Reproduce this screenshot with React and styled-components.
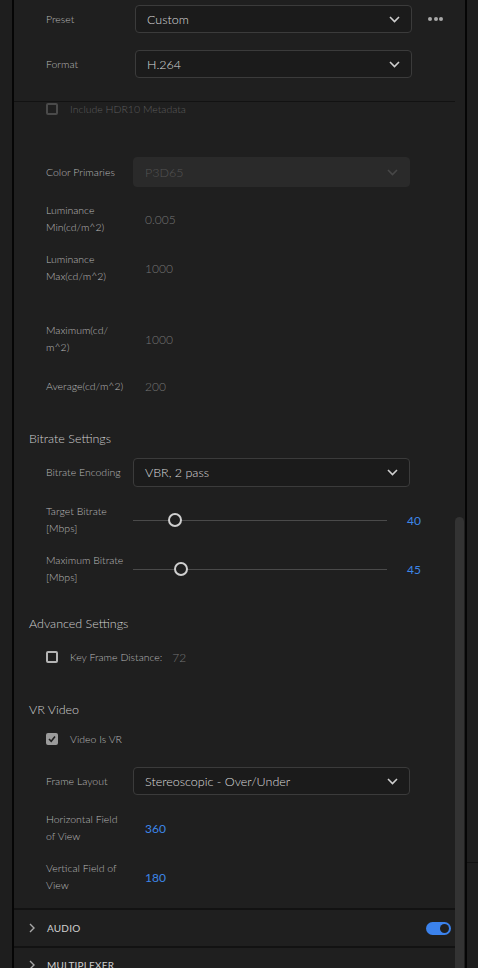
import React from "react";
import styled, { createGlobalStyle } from "styled-components";

const GlobalStyle = createGlobalStyle`
  html, body {
    margin: 0;
    padding: 0;
    background: #1f1f1f;
  }
  body {
    font-family: Lato, "Open Sans", sans-serif;
    font-weight: 300;
    -webkit-font-smoothing: antialiased;
  }
`;

const Frame = styled.div`
  display: flex;
  width: 478px;
  height: 968px;
  overflow: hidden;
  background: #1f1f1f;
`;

const Gutter = styled.div`
  width: ${(p) => p.$w}px;
  flex-shrink: 0;
  background: #1e1e1e;
`;

const GutterLine = styled.div`
  margin-top: ${(p) => p.$top}px;
  height: 1px;
  background: #121212;
`;

const Rule = styled.div`
  width: 2px;
  flex-shrink: 0;
  background: #050505;
`;

const Panel = styled.div`
  display: flex;
  width: 451px;
  flex-shrink: 0;
  background: #1f1f1f;
`;

const Content = styled.div`
  width: 441px;
  display: flex;
  flex-direction: column;
`;

const ScrollTrack = styled.div`
  width: 10px;
  padding-top: 517px;
  display: flex;
  flex-direction: column;
`;

const Thumb = styled.div`
  flex: 1;
  width: 9px;
  background: #333333;
  border-radius: 5px 5px 0 0;
`;

const Row = styled.div`
  display: flex;
  align-items: center;
  flex-shrink: 0;
  height: ${(p) => p.$h}px;
  margin-top: ${(p) => p.$mt || 0}px;
  padding-left: 32px;
`;

const Label = styled.div`
  width: ${(p) => p.$w || 87}px;
  flex-shrink: 0;
  font-size: 10.5px;
  line-height: 17px;
  color: #b8b8b8;
  white-space: nowrap;
`;

const SectionTitle = styled.div`
  flex-shrink: 0;
  height: 18px;
  margin-top: ${(p) => p.$mt}px;
  padding-left: 15px;
  font-size: 12.5px;
  line-height: 18px;
  color: #cfcfcf;
`;

const SelectBox = styled.div`
  width: 277px;
  height: ${(p) => p.$h || 28}px;
  box-sizing: border-box;
  display: flex;
  align-items: center;
  justify-content: space-between;
  padding: 0 11px 0 11px;
  border-radius: 4px;
  background: ${(p) => (p.$disabled ? "#2a2a2a" : "#1b1b1b")};
  border: 1px solid ${(p) => (p.$disabled ? "#2a2a2a" : "#3b3b3b")};
  color: ${(p) => (p.$disabled ? "#545454" : "#dcdcdc")};
  font-size: 12.5px;
`;

const Dots = styled.div`
  display: flex;
  gap: 1.5px;
  margin-left: 16px;
  span {
    width: 4px;
    height: 4px;
    border-radius: 50%;
    background: #a8a8a8;
  }
`;

const Divider = styled.div`
  flex-shrink: 0;
  height: ${(p) => p.$h || 1}px;
  margin-top: ${(p) => p.$mt || 0}px;
  background: #121212;
`;

const Value = styled.div`
  font-size: 12px;
  margin-left: ${(p) => p.$ml || 12}px;
  font-weight: ${(p) => (p.$blue ? 400 : 300)};
  color: ${(p) => (p.$blue ? "#3d86e8" : "#747474")};
`;

const Box = styled.div`
  width: 12px;
  height: 12px;
  box-sizing: border-box;
  border-radius: 2px;
  flex-shrink: 0;
  display: flex;
  align-items: center;
  justify-content: center;
  border: 2px solid ${(p) => p.$color};
  background: ${(p) => (p.$checked ? p.$color : "transparent")};
`;

const CheckText = styled.div`
  margin-left: 12px;
  font-size: 10.5px;
  color: ${(p) => p.$color};
  white-space: nowrap;
`;

const SliderTrack = styled.div`
  position: relative;
  width: 254px;
  height: 1px;
  background: #4a4a4a;
  flex-shrink: 0;
`;

const SliderKnob = styled.div`
  position: absolute;
  top: -7px;
  width: 14px;
  height: 14px;
  box-sizing: border-box;
  margin-left: -7px;
  border-radius: 50%;
  border: 2px solid #cfcfcf;
  background: #1f1f1f;
`;

const GroupRow = styled.div`
  display: flex;
  align-items: center;
  flex-shrink: 0;
  height: ${(p) => p.$h}px;
  padding: 0 4px 0 15px;
  font-size: 10px;
  font-weight: 400;
  letter-spacing: 0.2px;
  color: #cfcfcf;
`;

const GroupName = styled.div`
  flex: 1;
  margin-left: 12px;
`;

const Toggle = styled.div`
  width: 25px;
  height: 13px;
  box-sizing: border-box;
  border-radius: 7px;
  background: #3b82ec;
  display: flex;
  align-items: center;
  justify-content: flex-end;
  padding-right: 2px;
  span {
    width: 9px;
    height: 9px;
    border-radius: 50%;
    background: #1f1f1f;
  }
`;

const Chevron = ({ color = "#cfcfcf" }) => (
  <svg width="11" height="7" viewBox="0 0 11 7">
    <polyline points="1,1 5.5,5.5 10,1" fill="none" stroke={color} strokeWidth="1.6" />
  </svg>
);

const RightChevron = () => (
  <svg width="6" height="10" viewBox="0 0 6 10">
    <polyline points="1,1 5,5 1,9" fill="none" stroke="#a8a8a8" strokeWidth="1.4" />
  </svg>
);

const Check = () => (
  <svg width="8" height="8" viewBox="0 0 8 8">
    <polyline points="1,4 3.2,6.2 7,1.6" fill="none" stroke="#1f1f1f" strokeWidth="1.6" />
  </svg>
);

const Select = ({ value, disabled, h }) => (
  <SelectBox $disabled={disabled} $h={h}>
    <span>{value}</span>
    <Chevron color={disabled ? "#474747" : "#cfcfcf"} />
  </SelectBox>
);

const Slider = ({ value, max }) => (
  <SliderTrack>
    <SliderKnob style={{ left: `${(value / max) * 100}%` }} />
  </SliderTrack>
);

const Checkbox = ({ checked, color, textColor, children }) => (
  <>
    <Box $checked={checked} $color={color}>
      {checked && <Check />}
    </Box>
    <CheckText $color={textColor}>{children}</CheckText>
  </>
);

const App = () => {
  return (
    <>
      <GlobalStyle />
      <Frame>
        <Gutter $w={12} />
        <Rule />
        <Panel>
          <Content>
            <Row $h={28} $mt={5}>
              <Label $w={89}>Preset</Label>
              <Select value="Custom" />
              <Dots>
                <span />
                <span />
                <span />
              </Dots>
            </Row>
            <Row $h={28} $mt={17}>
              <Label $w={89}>Format</Label>
              <Select value="H.264" />
            </Row>
            <Divider $mt={23} />

            <Row $h={14}>
              <Checkbox color="#4a4a4a" textColor="#5c5c5c">
                Include HDR10 Metadata
              </Checkbox>
            </Row>
            <Row $h={30} $mt={41}>
              <Label>Color Primaries</Label>
              <Select value="P3D65" disabled h={30} />
            </Row>
            <Row $h={34} $mt={15}>
              <Label>
                Luminance
                <br />
                Min(cd/m^2)
              </Label>
              <Value>0.005</Value>
            </Row>
            <Row $h={34} $mt={15}>
              <Label>
                Luminance
                <br />
                Max(cd/m^2)
              </Label>
              <Value>1000</Value>
            </Row>
            <Row $h={34} $mt={37}>
              <Label>
                Maximum(cd/
                <br />
                m^2)
              </Label>
              <Value>1000</Value>
            </Row>
            <Row $h={17} $mt={22}>
              <Label>Average(cd/m^2)</Label>
              <Value>200</Value>
            </Row>

            <SectionTitle $mt={35}>Bitrate Settings</SectionTitle>
            <Row $h={29} $mt={10}>
              <Label>Bitrate Encoding</Label>
              <Select value="VBR, 2 pass" h={29} />
            </Row>
            <Row $h={34} $mt={16}>
              <Label>
                Target Bitrate
                <br />
                [Mbps]
              </Label>
              <Slider value={40} max={240} />
              <Value $blue $ml={20}>40</Value>
            </Row>
            <Row $h={34} $mt={15}>
              <Label>
                Maximum Bitrate
                <br />
                [Mbps]
              </Label>
              <Slider value={45} max={240} />
              <Value $blue $ml={20}>45</Value>
            </Row>

            <SectionTitle $mt={29}>Advanced Settings</SectionTitle>
            <Row $h={14} $mt={17}>
              <Checkbox color="#b4b4b4" textColor="#b8b8b8">
                Key Frame Distance:
              </Checkbox>
              <Value $ml={10}>72</Value>
            </Row>

            <SectionTitle $mt={37}>VR Video</SectionTitle>
            <Row $h={14} $mt={13}>
              <Checkbox checked color="#9b9b9b" textColor="#b8b8b8">
                Video Is VR
              </Checkbox>
            </Row>
            <Row $h={28} $mt={21}>
              <Label>Frame Layout</Label>
              <Select value="Stereoscopic - Over/Under" />
            </Row>
            <Row $h={34} $mt={16}>
              <Label>
                Horizontal Field
                <br />
                of View
              </Label>
              <Value $blue>360</Value>
            </Row>
            <Row $h={34} $mt={15}>
              <Label>
                Vertical Field of
                <br />
                View
              </Label>
              <Value $blue>180</Value>
            </Row>

            <Divider $mt={14} $h={2} />
            <GroupRow $h={36}>
              <RightChevron />
              <GroupName>AUDIO</GroupName>
              <Toggle>
                <span />
              </Toggle>
            </GroupRow>
            <Divider $h={2} />
            <GroupRow $h={34}>
              <RightChevron />
              <GroupName>MULTIPLEXER</GroupName>
            </GroupRow>
          </Content>
          <ScrollTrack>
            <Thumb />
          </ScrollTrack>
        </Panel>
        <Rule />
        <Gutter $w={11}>
          <GutterLine $top={862} />
        </Gutter>
      </Frame>
    </>
  );
};

export default App;
